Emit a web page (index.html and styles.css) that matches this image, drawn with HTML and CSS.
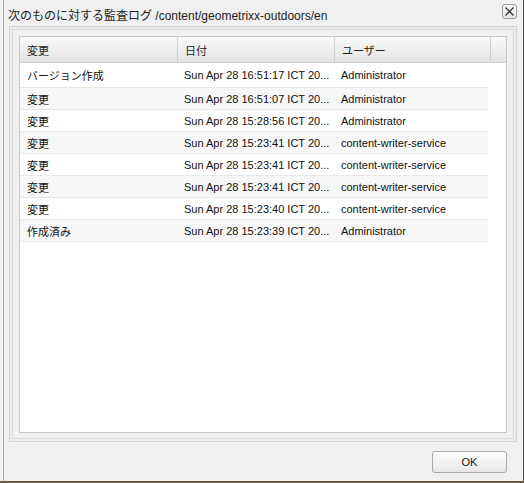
FILE: index.html
```html
<!DOCTYPE html>
<html lang="ja">
<head>
<meta charset="utf-8">
<title>監査ログ</title>
<link rel="stylesheet" href="styles.css">
</head>
<body>
<div class="dialog">
  <div class="titlebar">
    <span class="title">次のものに対する監査ログ /content/geometrixx-outdoors/en</span>
    <button class="close" aria-label="close">
      <svg width="9" height="9" viewBox="0 0 9 9"><path d="M0.5 0.5 L8.5 8.5 M8.5 0.5 L0.5 8.5" stroke="#333" stroke-width="1.3" fill="none"/></svg>
    </button>
  </div>
  <div class="frame">
    <div class="inner">
      <div class="grid">
        <div class="ghead">
          <div class="hcell c1">変更</div>
          <div class="hcell c2">日付</div>
          <div class="hcell c3">ユーザー</div>
          <div class="hcell spacer"></div>
        </div>
        <div class="gbody">
          <div class="row first"><div class="cell c1 jp">バージョン作成</div><div class="cell c2">Sun Apr 28 16:51:17 ICT 20...</div><div class="cell c3">Administrator</div></div>
          <div class="row alt"><div class="cell c1 jp">変更</div><div class="cell c2">Sun Apr 28 16:51:07 ICT 20...</div><div class="cell c3">Administrator</div></div>
          <div class="row"><div class="cell c1 jp">変更</div><div class="cell c2">Sun Apr 28 15:28:56 ICT 20...</div><div class="cell c3">Administrator</div></div>
          <div class="row alt"><div class="cell c1 jp">変更</div><div class="cell c2">Sun Apr 28 15:23:41 ICT 20...</div><div class="cell c3">content-writer-service</div></div>
          <div class="row"><div class="cell c1 jp">変更</div><div class="cell c2">Sun Apr 28 15:23:41 ICT 20...</div><div class="cell c3">content-writer-service</div></div>
          <div class="row alt"><div class="cell c1 jp">変更</div><div class="cell c2">Sun Apr 28 15:23:41 ICT 20...</div><div class="cell c3">content-writer-service</div></div>
          <div class="row"><div class="cell c1 jp">変更</div><div class="cell c2">Sun Apr 28 15:23:40 ICT 20...</div><div class="cell c3">content-writer-service</div></div>
          <div class="row alt"><div class="cell c1 jp">作成済み</div><div class="cell c2">Sun Apr 28 15:23:39 ICT 20...</div><div class="cell c3">Administrator</div></div>
        </div>
      </div>
    </div>
  </div>
  <div class="footer">
    <button class="ok">OK</button>
  </div>
</div>
</body>
</html>
```

FILE: styles.css
```css
html, body {
  margin: 0;
  padding: 0;
}
body {
  width: 524px;
  height: 483px;
  background: linear-gradient(to bottom, #f4f4f4 481px, #6e5a3c 481px);
  overflow: hidden;
  font-family: "Liberation Sans", Arial, "Noto Sans CJK JP", sans-serif;
}
.dialog {
  margin-left: 3px;
  width: 519px;
  height: 481px;
  background: #f0f0f0;
  border-left: 1px solid #a9a9a9;
  border-right: 1px solid #4a4a4a;
  display: flex;
  flex-direction: column;
}
.titlebar {
  height: 26px;
  display: flex;
  align-items: center;
  padding-left: 4px;
  padding-right: 6px;
  box-sizing: border-box;
}
.title {
  flex: 1;
  font-size: 12px;
  color: #222;
  font-family: "Liberation Sans", Arial, "Noto Sans CJK JP", sans-serif;
  margin-top: 2px;
}
.close {
  width: 15px;
  height: 15px;
  padding: 0;
  border: 1px solid #9a9a9a;
  border-radius: 3px;
  background: linear-gradient(#fafafa, #e6e6e6);
  display: flex;
  align-items: center;
  justify-content: center;
  margin-top: -3px;
}
.frame {
  margin-left: 5px;
  width: 508px;
  height: 416px;
  box-sizing: border-box;
  border: 1px solid #d2d2d2;
  padding: 2px;
  background: #ececec;
}
.inner {
  height: 100%;
  box-sizing: border-box;
  border: 1px solid #d9d9d9;
  padding: 6px;
  background: #f0f0f0;
}
.grid {
  height: 397px;
  box-sizing: border-box;
  border: 1px solid #c8c8c8;
  background: #fff;
  display: flex;
  flex-direction: column;
}
.ghead {
  height: 25px;
  display: flex;
  background: linear-gradient(#f9f9f9, #e3e3e3);
  border-bottom: 1px solid #d0d0d0;
}
.hcell {
  box-sizing: border-box;
  border-right: 1px solid #d0d0d0;
  font-size: 11px;
  color: #222;
  padding-left: 7px;
  display: flex;
  align-items: center;
  font-family: "Noto Sans CJK JP", sans-serif;
}
.c1 { width: 158px; }
.c2 { width: 157px; }
.c3 { width: 156px; }
.spacer { flex: 1; border-right: none; }
.gbody {
  width: 468px;
}
.row {
  display: flex;
  height: 22px;
  box-sizing: border-box;
  border-bottom: 1px solid #e9e9e9;
  background: #fff;
}
.row.first { height: 25px; }
.row.alt { background: #f7f7f7; }
.cell {
  box-sizing: border-box;
  padding-left: 7px;
  font-size: 11px;
  color: #111;
  display: flex;
  align-items: center;
  white-space: nowrap;
}
.cell.c2, .cell.c3 { padding-left: 6px; }
.cell.c3 { width: 153px; }
.jp {
  font-family: "Noto Sans CJK JP", sans-serif;
  font-size: 11px;
}
.footer {
  flex: 1;
  display: flex;
  justify-content: flex-end;
  align-items: flex-start;
  padding-top: 9px;
  padding-right: 16px;
}
.ok {
  width: 75px;
  height: 22px;
  border: 1px solid #a8a8a8;
  border-radius: 3px;
  background: linear-gradient(#fdfdfd, #e7e7e7);
  font-family: "Liberation Sans", Arial, sans-serif;
  font-size: 11px;
  color: #222;
  padding: 0;
}
```
